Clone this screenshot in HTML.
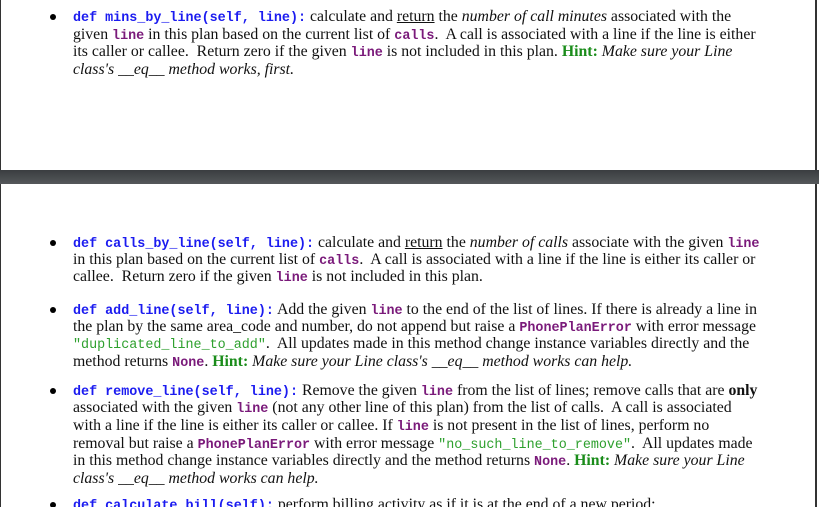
<!DOCTYPE html>
<html><head><meta charset="utf-8"><style>
html,body{margin:0;padding:0;width:819px;height:507px;overflow:hidden;background:#fff;position:relative}
.pg{position:absolute;left:0;width:817px;border-left:1px solid #333;border-right:2px solid #333;background:#fff;box-sizing:border-box}
.band{position:absolute;left:0;top:170px;width:819px;height:14px;background:linear-gradient(#3a3d40,#55585b)}
.l{position:absolute;left:73px;white-space:nowrap;font-family:"Liberation Serif",serif;font-size:15.8px;line-height:18px;color:#111}
.b{position:absolute;left:50px;width:6px;height:6px;border-radius:50%;background:#000}
code{font-family:"Liberation Mono",monospace;font-size:13.4px;font-weight:bold;color:#7a1a7a}
code.d{color:#1b1bf0}
code.s{color:#2ea02e;font-weight:normal}
.h{color:#1a8c1a;font-weight:bold}
u{text-decoration:underline}
</style></head><body>
<div class="pg" style="top:0;height:170px"></div>
<div class="band"></div>
<div class="pg" style="top:184px;height:323px"></div>

<div class="b" style="top:14px"></div>
<div class="l" style="top:8px"><code class="d">def mins_by_line(self, line):</code> calculate and <u>return</u> the <i>number of call minutes</i> associated with the</div>
<div class="l" style="top:26px">given <code>line</code> in this plan based on the current list of <code>calls</code>.&nbsp; A call is associated with a line if the line is either</div>
<div class="l" style="top:43px">its caller or callee.&nbsp; Return zero if the given <code>line</code> is not included in this plan. <span class="h">Hint:</span> <i>Make sure your Line</i></div>
<div class="l" style="top:61px"><i>class's __eq__ method works, first.</i></div>

<div class="b" style="top:240px"></div>
<div class="l" style="top:234px"><code class="d">def calls_by_line(self, line):</code> calculate and <u>return</u> the <i>number of calls</i> associate with the given <code>line</code></div>
<div class="l" style="top:251px">in this plan based on the current list of <code>calls</code>.&nbsp; A call is associated with a line if the line is either its caller or</div>
<div class="l" style="top:268px">callee.&nbsp; Return zero if the given <code>line</code> is not included in this plan.</div>

<div class="b" style="top:307px"></div>
<div class="l" style="top:301px"><code class="d">def add_line(self, line):</code> Add the given <code>line</code> to the end of the list of lines. If there is already a line in</div>
<div class="l" style="top:318px">the plan by the same area_code and number, do not append but raise a <code>PhonePlanError</code> with error message</div>
<div class="l" style="top:335px"><code class="s">"duplicated_line_to_add"</code>.&nbsp; All updates made in this method change instance variables directly and the</div>
<div class="l" style="top:353px">method returns <code>None</code>. <span class="h">Hint:</span> <i>Make sure your Line class's __eq__ method works can help.</i></div>

<div class="b" style="top:388px"></div>
<div class="l" style="top:382px"><code class="d">def remove_line(self, line):</code> Remove the given <code>line</code> from the list of lines; remove calls that are <b>only</b></div>
<div class="l" style="top:399px">associated with the given <code>line</code> (not any other line of this plan) from the list of calls.&nbsp; A call is associated</div>
<div class="l" style="top:417px">with a line if the line is either its caller or callee. If <code>line</code> is not present in the list of lines, perform no</div>
<div class="l" style="top:435px">removal but raise a <code>PhonePlanError</code> with error message <code class="s">"no_such_line_to_remove"</code>.&nbsp; All updates made</div>
<div class="l" style="top:452px">in this method change instance variables directly and the method returns <code>None</code>. <span class="h">Hint:</span> <i>Make sure your Line</i></div>
<div class="l" style="top:470px"><i>class's __eq__ method works can help.</i></div>

<div class="b" style="top:502px"></div>
<div class="l" style="top:496px"><code class="d">def calculate_bill(self):</code> perform billing activity as if it is at the end of a new period:</div>
</body></html>
